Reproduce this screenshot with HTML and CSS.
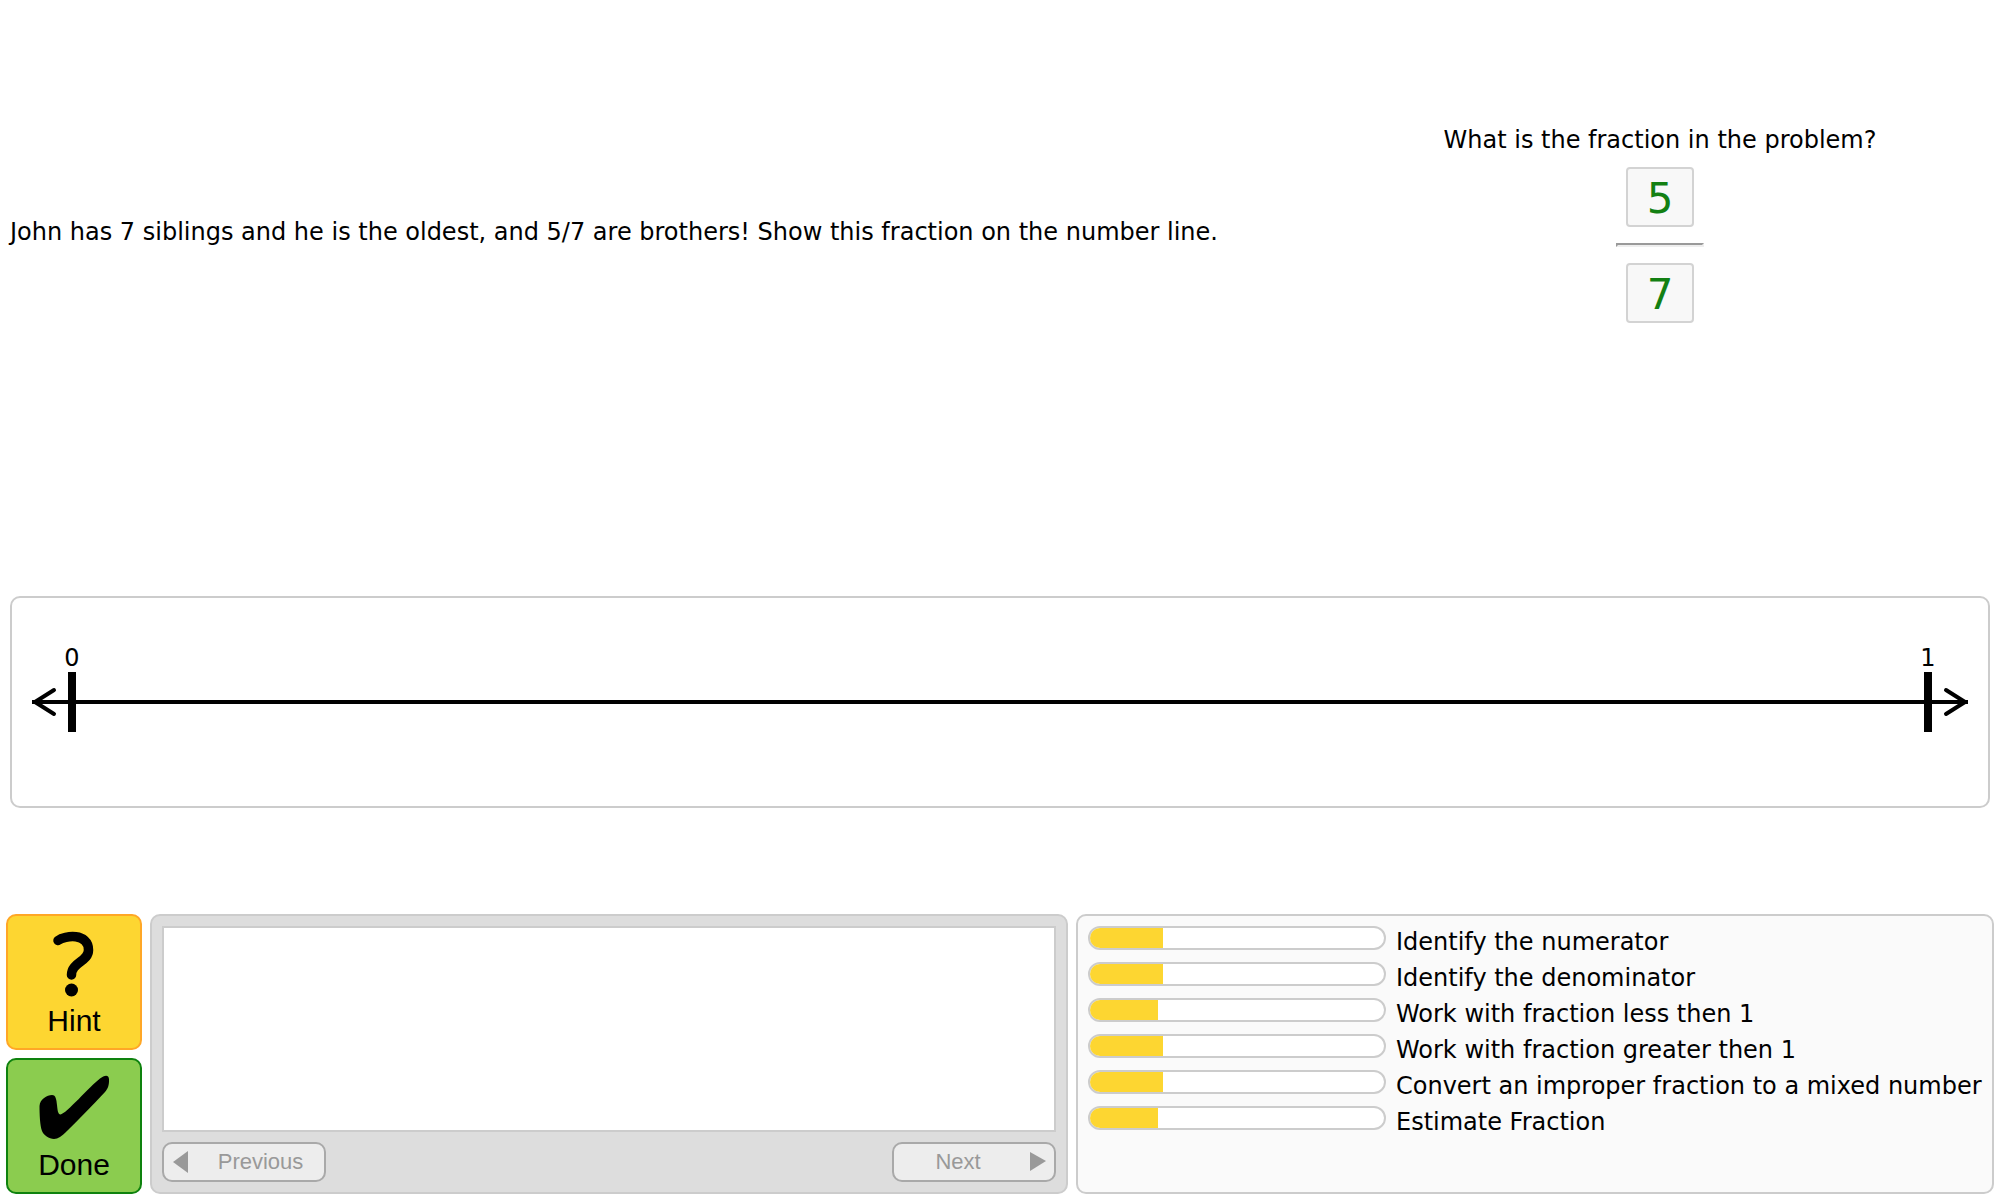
FILE: index.html
```html
<!DOCTYPE html>
<html lang="en">
<head>
<meta charset="utf-8">
<title>Fractions on the number line</title>
<link rel="stylesheet" href="styles.css">
</head>
<body>
<main class="tutor">
  <section class="problem">
    <p class="statement">John has 7 siblings and he is the oldest, and 5/7 are brothers! Show this fraction on the number line.</p>
    <div class="question">
      <p class="prompt">What is the fraction in the problem?</p>
      <input class="part" type="text" value="5" aria-label="Numerator" readonly>
      <hr class="bar">
      <input class="part" type="text" value="7" aria-label="Denominator" readonly>
    </div>
  </section>
  <section class="number-line" aria-label="Number line from 0 to 1">
    <svg class="axis" xmlns="http://www.w3.org/2000/svg">
      <rect class="axis-line" x="20" y="102" height="4"/>
      <path class="arrow" d="M42 92L23 104L42 116"/>
      <rect x="56" y="74" width="8" height="60"/>
      <text x="60" y="68">0</text>
      <svg x="100%" overflow="visible">
        <path class="arrow" d="M-42 92L-23 104L-42 116"/>
        <rect x="-64" y="74" width="8" height="60"/>
        <text x="-60" y="68">1</text>
      </svg>
    </svg>
  </section>
</main>
<footer class="tools">
  <div class="actions">
    <button class="action hint" type="button">
      <svg width="80" height="72" viewBox="0 0 80 72" aria-hidden="true"><path d="M24 12.500C31 7.500 54.500 4.500 54.500 22C54.500 34 37.500 34 37.500 47" fill="none" stroke="#000" stroke-width="9.500" stroke-linecap="round"/><circle cx="37.500" cy="62" r="6.500"/></svg>
      Hint
    </button>
    <button class="action done" type="button">
      <svg width="80" height="72" viewBox="0 0 80 72" aria-hidden="true"><path d="M5.500 34C6 27 13 23 18 23C22 23 22.500 28 23 33C23.500 38 24 42.500 26.500 42.500C32 42 56 14 66 6.500C70 3.500 74.500 2 75 7C75.300 13 74 16.500 71 20C58 34 44 48 32 60C28 64 24 67 20 67C15 67 9.500 63 8 59C6 54 5.500 42 5.500 34Z"/></svg>
      Done
    </button>
  </div>
  <section class="panel messages" aria-label="Hints">
    <div class="message" role="status"></div>
    <div class="pager">
      <button class="step" type="button" disabled>
        <svg width="16" height="22" viewBox="0 0 16 22" aria-hidden="true"><path d="M0 11L15 0V22Z"/></svg>
        <span class="step-label">Previous</span>
      </button>
      <button class="step step-next" type="button" disabled>
        <span class="step-label">Next</span>
        <svg width="16" height="22" viewBox="0 0 16 22" aria-hidden="true"><path d="M16 10L0 1V20Z"/></svg>
      </button>
    </div>
  </section>
  <section class="panel skills" aria-label="Skills">
    <div class="skill"><div class="meter"><div class="fill" style="width:25%"></div></div><span class="skill-name">Identify the numerator</span></div>
    <div class="skill"><div class="meter"><div class="fill" style="width:25%"></div></div><span class="skill-name">Identify the denominator</span></div>
    <div class="skill"><div class="meter"><div class="fill" style="width:23%"></div></div><span class="skill-name">Work with fraction less then 1</span></div>
    <div class="skill"><div class="meter"><div class="fill" style="width:25%"></div></div><span class="skill-name">Work with fraction greater then 1</span></div>
    <div class="skill"><div class="meter"><div class="fill" style="width:25%"></div></div><span class="skill-name">Convert an improper fraction to a mixed number</span></div>
    <div class="skill"><div class="meter"><div class="fill" style="width:23%"></div></div><span class="skill-name">Estimate Fraction</span></div>
  </section>
</footer>
</body>
</html>
```
FILE: styles.css
```css
* { box-sizing: border-box; }

body {
  margin: 0;
  min-height: 100vh;
  display: flex;
  flex-direction: column;
  background: #fff;
  color: #000;
  font: 24px/32px Verdana, "DejaVu Sans", sans-serif;
}

.tutor {
  flex: 1;
  display: grid;
  grid-template-rows: 1fr auto;
  padding: 10px 10px 106px;
}

.problem {
  display: grid;
  grid-template-columns: 2fr 1fr;
  align-items: center;
  align-content: start;
  padding: 114px 0;
}

.statement, .prompt { margin: 0; }

.statement { padding-top: 16px; }

.question {
  display: flex;
  flex-direction: column;
  align-items: center;
}

.part {
  width: 68px;
  height: 60px;
  padding: 2px 0 0;
  border: 2px solid #d3d3d3;
  border-radius: 4px;
  background: #f8f8f8;
  color: #138013;
  font: 42px Verdana, "DejaVu Sans", sans-serif;
  text-align: center;
}

.prompt { margin-bottom: 11px; }

.bar {
  width: 88px;
  margin: 16px 0;
  border: 2px solid;
  border-color: #9a9a9a #eee #eee #9a9a9a;
}

.number-line {
  border: 2px solid #ccc;
  border-radius: 10px;
}

.axis {
  display: block;
  width: 100%;
  height: 208px;
  text-anchor: middle;
}

.axis-line { width: calc(100% - 40px); }

.arrow {
  fill: none;
  stroke: #000;
  stroke-width: 4px;
  stroke-linecap: round;
  stroke-linejoin: round;
}

.tools {
  display: flex;
  gap: 8px;
  padding: 0 6px 6px;
}

.actions {
  display: flex;
  flex-direction: column;
  gap: 8px;
}

.action {
  width: 136px;
  height: 136px;
  display: flex;
  flex-direction: column;
  align-items: center;
  gap: 4px;
  padding: 12px 0 0;
  border: 2px solid #ffa726;
  border-radius: 10px;
  background: #fdd631;
  color: #000;
  font: 30px/34px "Liberation Sans", Arial, sans-serif;
}

.done {
  border-color: #0e820e;
  background: #8bcc4f;
}

.panel {
  flex: 1;
  padding: 10px;
  border: 2px solid #ccc;
  border-radius: 10px;
}

.messages {
  display: flex;
  flex-direction: column;
  gap: 10px;
  background: #ddd;
}

.message {
  flex: 1;
  border: 2px solid #ccc;
  background: #fff;
}

.pager {
  display: flex;
  justify-content: space-between;
}

.step {
  width: 164px;
  height: 40px;
  display: flex;
  align-items: center;
  gap: 8px;
  padding: 0 0 0 9px;
  border: 2px solid #a9a9a9;
  border-radius: 10px;
  background: #ededed;
  color: #999;
  fill: #999;
  font: 22px "Liberation Sans", Arial, sans-serif;
}

.step-next { padding: 0 8px 0 0; }

.step-label { flex: 1; text-align: center; }

.skills { background: #fafafa; }

.skill {
  display: flex;
  align-items: flex-start;
  gap: 10px;
  height: 36px;
}

.meter {
  flex: 0 0 calc(100% / 3);
  height: 24px;
  overflow: hidden;
  border: 2px solid #ccc;
  border-radius: 12px;
  background: #fff;
}

.fill { height: 100%; background: #fdd631; }

.skill-name { white-space: nowrap; }
```
